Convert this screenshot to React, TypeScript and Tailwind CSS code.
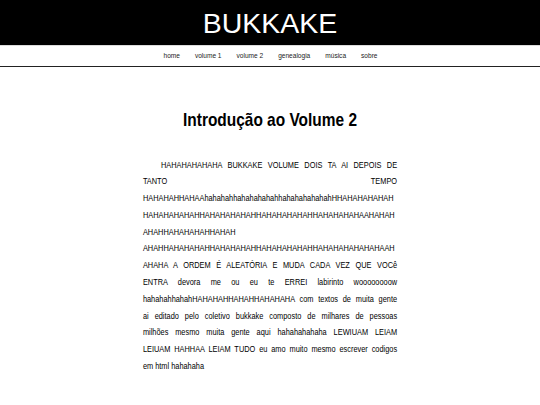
import React from "react";

const sans = "font-['Liberation_Sans',Arial,sans-serif]";

const lines: { t: string; j?: boolean; indent?: boolean }[] = [
  { t: "HAHAHAHAHAHA BUKKAKE VOLUME DOIS TA AI DEPOIS DE", j: true, indent: true },
  { t: "TANTO TEMPO", j: true },
  { t: "HAHAHAHHAHAAhahahahhahahahahahhahahahahahahHHAHAHAHAHAH" },
  { t: "HAHAHAHAHAHHAHAHAHAHAHHAHAHAHAHAHHAHAHAHAHAAHAHAH" },
  { t: "AHAHHAHAHAHAHHAHAH" },
  { t: "AHAHHAHAHAHAHHAHAHAHAHHAHAHAHAHAHHAHAHAHAHAHAHAAH" },
  { t: "AHAHA A ORDEM É ALEATÓRIA E MUDA CADA VEZ QUE VOCê", j: true },
  { t: "ENTRA devora me ou eu te ERREI labirinto woooooooow", j: true },
  { t: "hahahahhahahHAHAHAHHAHAHHAHAHAHA com textos de muita gente", j: true },
  { t: "ai editado pelo coletivo bukkake composto de milhares de pessoas", j: true },
  { t: "milhões mesmo muita gente aqui hahahahahaha LEWIUAM LEIAM", j: true },
  { t: "LEIUAM HAHHAA LEIAM TUDO eu amo muito mesmo escrever codigos", j: true },
  { t: "em html hahahaha" },
];

export default function App() {
  return (
    <div className={`w-[540px] h-[405px] bg-white overflow-hidden ${sans}`}>
      <header className="h-[45px] bg-black flex items-center justify-center">
        <h1 className="text-white text-[28.5px] leading-none pt-[1px]">BUKKAKE</h1>
      </header>
      <div className="h-[1px] bg-[#dcdcdc]" />
      <nav className="h-[20px] flex items-center justify-center">
        <div className="flex items-center gap-[18.3px] text-[8px] text-[#222] [transform:scaleX(0.82)]">
          <span>home</span>
          <span>volume 1</span>
          <span>volume 2</span>
          <span>genealogia</span>
          <span>música</span>
          <span>sobre</span>
        </div>
      </nav>
      <div className="h-[1px] bg-[#222]" />
      <main className="text-black">
        <h2 className="mt-[44px] text-center font-bold text-[18.5px] leading-none [transform:scaleX(0.835)]">
          Introdução ao Volume 2
        </h2>
        <div className="mx-auto w-[310px] mt-[27px] text-[9px] leading-[16.8px] [transform:scaleX(0.82)]">
          {lines.map((l, i) => (
            <div
              key={i}
              className={
                l.j
                  ? `text-justify [text-align-last:justify] ${l.indent ? "pl-[22px]" : ""}`
                  : "text-left whitespace-nowrap"
              }
            >
              {l.t}
            </div>
          ))}
        </div>
      </main>
    </div>
  );
}
